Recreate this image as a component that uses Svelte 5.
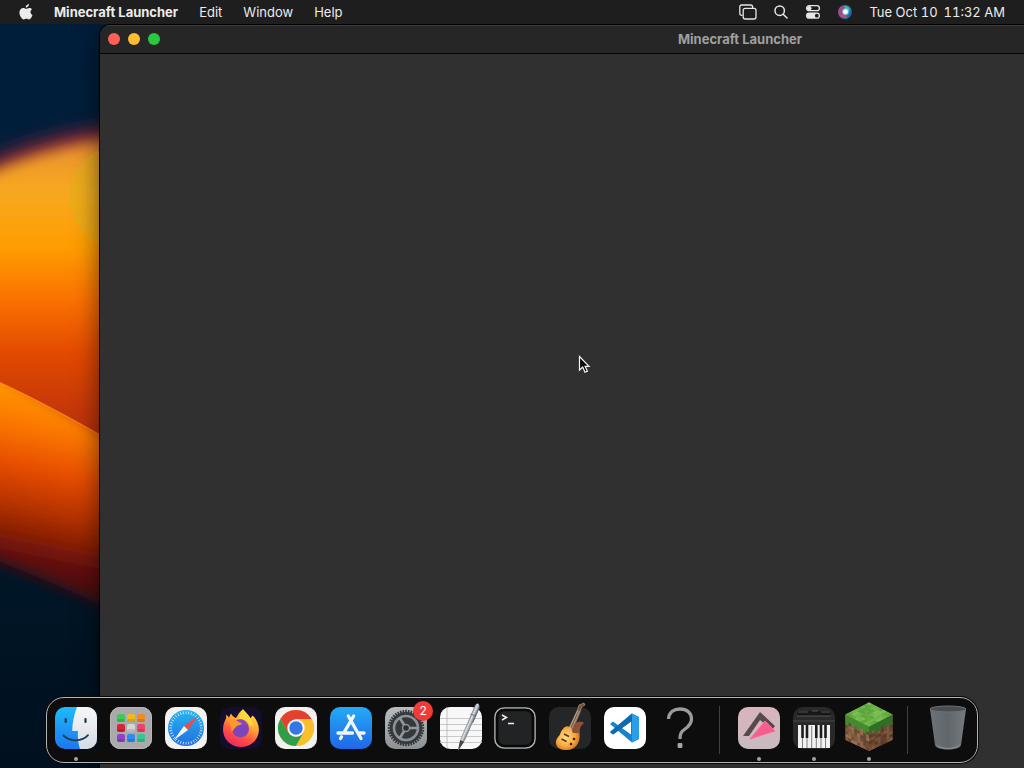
<script>
  const menus = ['Edit', 'Window', 'Help'];

  const dock = [
    { id: 'finder', label: 'Finder', running: true },
    { id: 'launchpad', label: 'Launchpad' },
    { id: 'safari', label: 'Safari' },
    { id: 'firefox', label: 'Firefox' },
    { id: 'chrome', label: 'Google Chrome' },
    { id: 'appstore', label: 'App Store' },
    { id: 'settings', label: 'System Settings', badge: 2 },
    { id: 'textedit', label: 'TextEdit' },
    { id: 'terminal', label: 'Terminal' },
    { id: 'garageband', label: 'GarageBand' },
    { id: 'vscode', label: 'Visual Studio Code' },
    { id: 'unknown', label: 'Unknown application' },
    { id: 'sep1', separator: true },
    { id: 'arrow', label: 'Arrow', running: true },
    { id: 'piano', label: 'Piano', running: true },
    { id: 'minecraft', label: 'Minecraft Launcher', running: true },
    { id: 'sep2', separator: true },
    { id: 'trash', label: 'Trash' }
  ];

  const padColors = ['#3fc95b', '#f5b91c', '#f58a1f', '#d92534', '#d5d5d8', '#f0436a', '#8f45c9', '#2c8df0', '#35c795'];
  const ticks = Array.from({ length: 36 }, (_, i) => i * 10);
  const teeth = Array.from({ length: 40 }, (_, i) => i * 9);

  // small fixed pattern of light and dark pixels for the block faces
  const dirtColors = ['#664630', '#8f6649', '#9b7052', '#6f4e37', '#805b40'];
  const grassColors = ['#72b74b', '#5fa53f', '#7cc155', '#68ad44'];
  const noise = '2704163519406273851962403175820649137502864913057284610395728140';
  const cells = [...noise].map((n, i) => ({ x: i % 8, y: Math.floor(i / 8), n: Number(n) }));
</script>

<div class="desktop">
  <svg class="wallpaper" viewBox="0 0 1024 768" preserveAspectRatio="xMinYMin slice" aria-hidden="true">
    <defs>
      <linearGradient id="sky" x1="0" y1="0" x2="0" y2="1">
        <stop offset="0" stop-color="#001d3a" />
        <stop offset=".25" stop-color="#001f3b" />
        <stop offset=".75" stop-color="#001627" />
        <stop offset="1" stop-color="#00101f" />
      </linearGradient>
      <linearGradient id="upper" gradientUnits="userSpaceOnUse" x1="0" y1="130" x2="0" y2="440">
        <stop offset="0" stop-color="#e58b33" />
        <stop offset=".2" stop-color="#f7a920" />
        <stop offset=".38" stop-color="#ff9c00" />
        <stop offset=".55" stop-color="#fa7100" />
        <stop offset=".72" stop-color="#e24a00" />
        <stop offset="1" stop-color="#b62d0e" />
      </linearGradient>
      <linearGradient id="lower" gradientUnits="userSpaceOnUse" x1="30" y1="385" x2="-10" y2="580">
        <stop offset="0" stop-color="#ff9a08" />
        <stop offset=".2" stop-color="#fc7800" />
        <stop offset=".42" stop-color="#e54b00" />
        <stop offset=".62" stop-color="#b03002" />
        <stop offset=".84" stop-color="#651009" />
        <stop offset="1" stop-color="#420a14" />
      </linearGradient>
      <filter id="soft" x="-20%" y="-20%" width="140%" height="140%"><feGaussianBlur stdDeviation="9" /></filter>
      <filter id="softer" x="-20%" y="-20%" width="140%" height="140%"><feGaussianBlur stdDeviation="7" /></filter>
    </defs>
    <rect width="1024" height="768" fill="url(#sky)" />
    <path d="M-60 188Q20 130 160 120V460H-60Z" fill="#7c2038" filter="url(#soft)" />
    <path d="M-60 202Q20 143 160 133V460H-60Z" fill="url(#upper)" filter="url(#softer)" />
    <path d="M-60 340V540Q30 570 160 632V465Z" fill="url(#lower)" filter="url(#softer)" />
    <path d="M-60 230L-60 352L0 382Q50 405 110 440L160 468V230Z" fill="url(#upper)" />
    <circle cx="120" cy="197" r="51" fill="#e6ae1a" opacity=".6" />
    <path d="M0 383Q50 406 110 441" fill="none" stroke="#ff9435" stroke-width="1" opacity=".5" />
  </svg>

  <header class="menubar">
    <nav class="menus" aria-label="Menu bar">
      <button class="apple" aria-label="Apple menu">
        <svg width="14" height="18" viewBox="0 0 14 18" fill="#ececec">
          <path d="M9.9 1c.1 1-.3 1.900-.9 2.600S7.500 4.700 6.700 4.600c-.1-.9.3-1.800.9-2.400S9.100 1.100 9.900 1z" />
          <path d="M13 6.300c-2.300 1.500-1.800 4.600.5 5.600-.6 1.700-2 4.500-3.500 4.500-1 0-1.400-.6-2.600-.6s-1.600.6-2.600.6C2.900 16.500.4 12.500.4 9.600.4 6.700 2.400 5 4.300 5c1.200 0 2.200.8 2.900.8.700 0 1.800-.9 3.300-.8 1 0 1.900.5 2.500 1.300z" />
        </svg>
      </button>
      <button class="app-name">Minecraft Launcher</button>
      {#each menus as menu}
        <button>{menu}</button>
      {/each}
    </nav>
    <div class="status">
      <button aria-label="Stage Manager">
        <svg width="18" height="16" viewBox="0 0 18 16" fill="none" stroke="#e6e6e6" stroke-width="1.300">
          <path d="M3.500 11.300H2.800C1.500 11.300.8 10.600.8 9.300V3C.8 1.700 1.500 1 2.800 1h8.800c1.300 0 2 .7 2 2v1" />
          <rect x="4.200" y="4.400" width="12.800" height="10.600" rx="2" />
        </svg>
      </button>
      <button aria-label="Spotlight">
        <svg width="14" height="16" viewBox="0 0 14 16" fill="none" stroke="#e6e6e6" stroke-width="1.500" stroke-linecap="round">
          <circle cx="5.700" cy="6.700" r="4.700" /><path d="M9.200 10.200L13 14" />
        </svg>
      </button>
      <button aria-label="Control Center">
        <svg width="16" height="16" viewBox="0 0 16 16">
          <rect x="1.600" y="1.700" width="12.800" height="5" rx="2.500" fill="none" stroke="#e6e6e6" stroke-width="1.300" />
          <circle cx="4.200" cy="4.200" r="2.300" fill="#e6e6e6" />
          <rect x="1" y="8.600" width="14" height="6.200" rx="3.100" fill="#e6e6e6" />
          <circle cx="11.800" cy="11.700" r="1.900" fill="#1e1e1e" />
        </svg>
      </button>
      <button aria-label="Siri">
        <svg width="14" height="14" viewBox="1 1 14 14">
          <defs>
            <linearGradient id="siri" x1="0" y1=".3" x2="1" y2=".7">
              <stop offset="0" stop-color="#b94383" /><stop offset=".4" stop-color="#75569f" /><stop offset=".7" stop-color="#247fae" /><stop offset="1" stop-color="#1e4d9c" />
            </linearGradient>
            <radialGradient id="glow"><stop offset="0" stop-color="#fff" /><stop offset=".5" stop-color="#dffafa" /><stop offset="1" stop-color="#7ce0dc" stop-opacity="0" /></radialGradient>
          </defs>
          <circle cx="8" cy="8" r="7" fill="url(#siri)" />
          <path d="M7 2c4-.5 6 2 5.500 5C10 5 8 6 7 2z" fill="#40b6a1" />
          <path d="M3 11c3-2 5-1 7 2-3 2-6 .5-7-2z" fill="#d34a66" opacity=".8" />
          <circle cx="8.500" cy="7.700" r="4" fill="url(#glow)" />
        </svg>
      </button>
      <button class="clock"><span>Tue Oct 10</span><span>11:32 AM</span></button>
    </div>
  </header>

  <main class="window">
    <div class="titlebar">
      <div class="lights">
        <button class="close" aria-label="Close"></button>
        <button class="minimize" aria-label="Minimize"></button>
        <button class="zoom" aria-label="Zoom"></button>
      </div>
      <h1>Minecraft Launcher</h1>
    </div>
    <div class="content"></div>
  </main>

  <svg class="pointer" width="14" height="20" viewBox="0 0 14 20" aria-hidden="true">
    <path d="M1.500 1.500V15L4.700 12L7 17.300L9.400 16.200L7.100 11.300H11Z" fill="#050505" stroke="#f5f5f5" stroke-width="1.200" />
  </svg>

  <nav class="dock" aria-label="Dock">
    {#each dock as item (item.id)}
      {#if item.separator}
        <span class="separator"></span>
      {:else}
        <button class="dock-item" aria-label={item.label}>
          <svg width="54" height="54" viewBox="0 0 54 54">
            {#if item.id === 'finder'}
              <defs>
                <linearGradient id="fblue" x1="0" y1="0" x2="0" y2="1"><stop offset="0" stop-color="#20b9fa" /><stop offset="1" stop-color="#1c78ee" /></linearGradient>
                <linearGradient id="fwhite" x1="0" y1="0" x2="0" y2="1"><stop offset="0" stop-color="#f7f7f8" /><stop offset="1" stop-color="#d5dce6" /></linearGradient>
                <clipPath id="fclip"><rect x="6" y="6" width="42" height="42" rx="10" /></clipPath>
              </defs>
              <g clip-path="url(#fclip)">
                <path d="M6 6H48V48H6Z" fill="url(#fblue)" />
                <path d="M28 6C25 14 23.500 21 23.200 30H29C28.500 36 29 42 31 48H49V6Z" fill="url(#fwhite)" />
              </g>
              <path d="M16.700 18v3M36.500 18v3" stroke="#17394f" stroke-width="2.200" stroke-linecap="round" />
              <path d="M14.500 34.500C21 41 33 41 39 34.200" fill="none" stroke="#183f57" stroke-width="1.800" stroke-linecap="round" />
            {:else if item.id === 'launchpad'}
              <rect x="6" y="6" width="42" height="42" rx="10" fill="#aaa9ab" />
              <rect x="6.500" y="6.500" width="41" height="41" rx="9.500" fill="none" stroke="#b8b7b8" />
              {#each padColors as color, i}
                <rect x={13 + (i % 3) * 10} y={13 + Math.floor(i / 3) * 10} width="8" height="8" rx="2" fill={color} />
                <rect x={13 + (i % 3) * 10} y={18 + Math.floor(i / 3) * 10} width="8" height="3" rx="1.500" fill="#000" opacity=".13" />
              {/each}
            {:else if item.id === 'safari'}
              <defs><linearGradient id="saf" x1="0" y1="0" x2="0" y2="1"><stop offset="0" stop-color="#25b5f1" /><stop offset="1" stop-color="#246ee0" /></linearGradient></defs>
              <rect x="6" y="6" width="42" height="42" rx="10" fill="#f2f2f3" />
              <circle cx="27" cy="27" r="18" fill="url(#saf)" />
              {#each ticks as angle}
                <path d="M27 10.300V13" stroke="#d9f1ff" stroke-width=".8" transform="rotate({angle} 27 27)" />
              {/each}
              <path d="M39.500 14.500L25 25L29 29Z" fill="#f04b46" />
              <path d="M14.500 39.500L25 25L29 29Z" fill="#f4f4f4" />
            {:else if item.id === 'firefox'}
              <defs>
                <linearGradient id="ff" x1=".8" y1="0" x2=".3" y2="1"><stop offset="0" stop-color="#ffe44b" /><stop offset=".4" stop-color="#ffa632" /><stop offset=".7" stop-color="#ff5044" /><stop offset="1" stop-color="#e92963" /></linearGradient>
                <radialGradient id="ffp"><stop offset="0" stop-color="#7148c9" /><stop offset="1" stop-color="#8740b4" /></radialGradient>
              </defs>
              <rect x="6" y="6" width="42" height="42" rx="10" fill="#150d2b" />
              <path d="M29 8.200C30 11 34 13.200 36.500 17.200L38.500 14.500C42 17.500 45 23 44.900 29C44.700 38.500 37 46 27 46C17 46 9 38.500 9 28.500C9 24 10.500 20 12 17.500L12.300 13.500L15 16.500L17 12.500C18 15 20 16 22 17C24 14 25 11 29 8.200Z" fill="url(#ff)" />
              <path d="M24 18C31 16.500 36 21 36 27C36 21 42 25 38 33C42 25 38 17 29 8.200C26 11 27 15 24 18Z" fill="#ffd83c" />
              <circle cx="26.500" cy="28" r="8.500" fill="url(#ffp)" />
              <path d="M20 21C23 17 31 17 34 24L28 24Z" fill="#8a45c4" />
              <path d="M12 18C17 16 21 18 24 20.500L28 22.500C27 24.500 23 24 22 26C20 28 19 29 18 31C16 27 18 23 12 18Z" fill="#ff972b" />
            {:else if item.id === 'chrome'}
              <rect x="6" y="6" width="42" height="42" rx="10" fill="#f1f1f1" />
              <circle cx="27" cy="27" r="18" fill="#f9bf2d" />
              <path d="M11.400 18A18 18 0 0 1 42.600 18H27V27L19.200 31.500Z" fill="#e4402f" />
              <path d="M11.400 18L19.200 31.500L27 36L34.800 31.500L27 45A18 18 0 0 1 11.400 18Z" fill="#329d49" />
              <path d="M42.600 18A18 18 0 0 1 27 45L34.800 31.500V18Z" fill="#f9bf2d" />
              <circle cx="27" cy="27" r="8.700" fill="#f7f7f7" />
              <circle cx="27" cy="27" r="6.700" fill="#3676e5" />
            {:else if item.id === 'appstore'}
              <defs><linearGradient id="store" x1="0" y1="0" x2="0" y2="1"><stop offset="0" stop-color="#24aaf6" /><stop offset="1" stop-color="#2067e7" /></linearGradient></defs>
              <rect x="6" y="6" width="42" height="42" rx="10" fill="url(#store)" />
              <g fill="none" stroke="#f1f6fc" stroke-width="3.300" stroke-linecap="round">
                <path d="M29.700 15L19.800 31.800M24.300 15L37 37.500M14 32H28.500M34 32H40M17.500 35.800L16.500 37.500" />
              </g>
            {:else if item.id === 'settings'}
              <defs><linearGradient id="set" x1="0" y1="0" x2="0" y2="1"><stop offset="0" stop-color="#b9bdc0" /><stop offset="1" stop-color="#8d9194" /></linearGradient></defs>
              <rect x="6" y="6" width="42" height="42" rx="10" fill="url(#set)" />
              {#each teeth as angle}
                <path d="M27 8.800V12" stroke="#303437" stroke-width="1.600" transform="rotate({angle} 27 27)" />
              {/each}
              <circle cx="27" cy="27" r="16" fill="#34383b" />
              <circle cx="27" cy="27" r="12" fill="none" stroke="#8b9195" stroke-width="2.600" />
              <circle cx="27" cy="27" r="3.500" fill="#2c3033" stroke="#8b9093" stroke-width="1.500" />
              <path d="M30.500 27H39M25.200 24L20.500 16.500M25.200 30L20.500 37.500" stroke="#92979a" stroke-width="2.600" />
            {:else if item.id === 'textedit'}
              <defs><linearGradient id="pen" x1="0" y1="0" x2="1" y2="0"><stop offset="0" stop-color="#65717c" /><stop offset=".4" stop-color="#e1e4e6" /><stop offset="1" stop-color="#6b7279" /></linearGradient></defs>
              <rect x="6" y="6" width="42" height="42" rx="10" fill="#f8f8f8" />
              <path d="M6 17.500H48M6 23.500H48M6 29.500H48M6 35.500H48M6 41.500H48" stroke="#c4c4c4" stroke-width=".9" />
              <path d="M13 6V48" stroke="#b9a8a8" stroke-width=".7" />
              <g transform="rotate(24 34 26)">
                <path d="M31.500 3Q33.500 -2 36.500 3V39L34.500 52L32 39Z" fill="url(#pen)" />
                <path d="M32 41H36.500L34.500 52Z" fill="#464646" />
                <path d="M36.500 4V20M31 13H37" stroke="#576775" stroke-width="1" />
              </g>
            {:else if item.id === 'terminal'}
              <rect x="7" y="7" width="40" height="40" rx="9" fill="#222324" stroke="#aeb0b0" stroke-width="1.600" />
              <rect x="9" y="9" width="36" height="36" rx="7" fill="none" stroke="#080808" stroke-width="2.600" />
              <path d="M14 14L18.500 16.500L14 19M20 22.500H26" fill="none" stroke="#f0f0f0" stroke-width="1.500" />
            {:else if item.id === 'garageband'}
              <defs><radialGradient id="gb" cx=".35" cy=".55" r=".65"><stop offset="0" stop-color="#ffe07a" /><stop offset=".5" stop-color="#f9a63a" /><stop offset="1" stop-color="#a8481c" /></radialGradient></defs>
              <rect x="6" y="6" width="42" height="42" rx="10" fill="#242627" />
              <path d="M25 29L34.500 9L36 4L41 2L42 4L38.500 6L37 11L29 30Z" fill="#76513a" stroke="#b7aaa0" stroke-width=".6" />
              <path d="M20 28C22 24 27 25 28 27C31 22 37 19 41 22C38 24 36 27 36.500 32C38 42 32 49 24 49C14 50 10 42 15 36C18 33 17 31 20 28Z" fill="url(#gb)" />
              <path d="M28 27C31 22 37 19 41 22C38 24 36 27 36.500 32L30 32Z" fill="#8a523a" />
              <path d="M20 42L35 9M22 43L36.500 10" stroke="#d8ccb8" stroke-width=".6" />
              <path d="M21 33L26 35.500M18.500 38L23.500 40.500" stroke="#5e2c18" stroke-width="1.500" />
              <circle cx="31" cy="38" r="1.300" fill="#3f1d11" /><circle cx="28" cy="43" r="1.300" fill="#3f1d11" />
            {:else if item.id === 'vscode'}
              <rect x="6" y="6" width="42" height="42" rx="10" fill="#fff" />
              <path d="M34 12.500L41 16V38L34 41.500L12 23L15 20.500L33 33.500V20.500L15 33.500L12 31Z" fill="#1683cf" />
              <path d="M34 12.500L41 16V38L34 41.500V12.500Z" fill="#2b9ee9" />
              <path d="M34 12.500L12 31L15 33.500L34 20Z" fill="#1269ad" />
            {:else if item.id === 'unknown'}
              <path d="M15.500 18C16 11 21 8 27 8C34 8 38.500 12 38.500 18C38.500 23 35.500 25.500 32 28C28.500 30.500 27 32 27 38" fill="none" stroke="#9b9b9b" stroke-width="3.300" />
              <rect x="24.600" y="42" width="4.800" height="5" rx="1" fill="#a5a5a5" />
            {:else if item.id === 'arrow'}
              <defs>
                <linearGradient id="arr" x1="0" y1="0" x2="0" y2="1"><stop offset="0" stop-color="#d9b4bd" /><stop offset="1" stop-color="#c7bbc0" /></linearGradient>
                <linearGradient id="pink" x1="0" y1="0" x2="1" y2="1"><stop offset="0" stop-color="#ff5c90" /><stop offset="1" stop-color="#ed5f8b" /></linearGradient>
              </defs>
              <rect x="6" y="6" width="42" height="42" rx="10" fill="url(#arr)" />
              <path d="M28 11L43 25L40 29L28 19L17 35L11 35Z" fill="#58494d" />
              <path d="M33 20L43 30L18 38Z" fill="url(#pink)" stroke="#f9709a" stroke-linejoin="round" />
            {:else if item.id === 'piano'}
              <rect x="6" y="6" width="42" height="42" rx="10" fill="#29292a" />
              <path d="M10 10H44V15H10Z" fill="#171718" />
              <path d="M11 11H21M25 10H31M34 11H43M10 15H44" stroke="#656566" stroke-width=".8" />
              <path d="M6 20H48" stroke="#48484a" />
              <rect x="11" y="24" width="32" height="23" fill="#f1f1f1" />
              <path d="M15.500 25V47M20 25V47M24.700 25V47M29.300 25V47M34 25V47M38.500 25V47" stroke="#626264" stroke-width=".8" />
              <path d="M15.500 24V37M20 24V37M29.300 24V37M34 24V37M38.500 24V37" stroke="#1c1c1d" stroke-width="2.600" />
            {:else if item.id === 'minecraft'}
              <path d="M3.500 13L27 26V50L3.500 39Z" fill="#805a40" />
              <path d="M27 26L50.500 13V39L27 50Z" fill="#68462f" />
              <g transform="matrix(2.940 1.400 0 3.100 3.500 14)">
                {#each cells as c}<rect x={c.x} y={c.y} width="1" height="1" fill={dirtColors[c.n % 5]} />{/each}
                <path d="M0 0H8V2H7V3H6V2H5V3H4V2H3V3H2V2H1V3H0Z" fill="#438a30" />
              </g>
              <g transform="matrix(2.940 -1.400 0 3.100 27 25.200)">
                {#each cells as c}<rect x={c.x} y={c.y} width="1" height="1" fill={dirtColors[(c.n + 2) % 5]} />{/each}
                <path d="M0 0H8V8H0Z" fill="#351d10" opacity=".25" />
                <path d="M0 0H8V3H7V2H6V3H5V2H4V3H2V2H1V3H0Z" fill="#2f6f26" />
              </g>
              <g transform="matrix(2.940 1.500 -2.940 1.500 27 1.500)">
                <rect width="8" height="8" fill="#6bb047" />
                {#each cells as c}<rect x={c.x} y={c.y} width="1" height="1" fill={grassColors[c.n % 4]} />{/each}
              </g>
            {:else if item.id === 'trash'}
              <defs><linearGradient id="bin" x1="0" y1="0" x2="1" y2="0"><stop offset="0" stop-color="#6d7276" /><stop offset=".5" stop-color="#60666a" /><stop offset="1" stop-color="#777b7e" /></linearGradient></defs>
              <path d="M9 8L14 44C15 50 39 50 40 44L45 8Z" fill="url(#bin)" />
              <ellipse cx="27" cy="8" rx="18" ry="3" fill="#4a4e51" stroke="#6f7376" stroke-width="1" />
              <path d="M15 43C19 48 35 48 39 43C38 50 16 50 15 43Z" fill="#9da1a3" opacity=".6" />
            {/if}
          </svg>
          <span class="dot" class:running={item.running}></span>
          {#if item.badge}<span class="badge">{item.badge}</span>{/if}
        </button>
      {/if}
    {/each}
  </nav>
</div>

<style>
  :global(body) {
    margin: 0;
    background: #001627;
  }

  .desktop {
    position: relative;
    min-height: 100vh;
    overflow: hidden;
    font-family: Inter, "Liberation Sans", sans-serif;
    font-size: 13px;
    line-height: 16px;
    color: #ececec;
  }

  button {
    display: flex;
    align-items: center;
    margin: 0;
    padding: 0;
    border: 0;
    background: none;
    color: inherit;
    font: inherit;
    white-space: nowrap;
  }

  .wallpaper {
    position: absolute;
    inset: 0;
    width: 100%;
    height: 100%;
  }

  .menubar {
    position: relative;
    z-index: 2;
    display: flex;
    justify-content: space-between;
    box-sizing: border-box;
    height: 24px;
    padding: 0 19px 1px;
    background: #1e1e1e;
  }

  .menus,
  .status {
    display: flex;
    align-items: center;
    gap: 21px;
  }

  .status {
    gap: 17px;
  }

  .app-name {
    font-weight: 700;
  }

  .clock {
    gap: 6px;
    font-variant-numeric: tabular-nums;
  }

  .window {
    position: absolute;
    top: 25px;
    bottom: 0;
    left: 100px;
    display: flex;
    flex-direction: column;
    width: 1280px;
    border-radius: 10px 10px 0 0;
    background: #303030;
    box-shadow: 0 0 0 1px #000, 0 8px 26px rgba(0, 0, 0, 0.6);
    overflow: hidden;
  }

  .titlebar {
    display: grid;
    grid-template-columns: 1fr auto 1fr;
    align-items: center;
    height: 28px;
    padding: 0 8px;
    border-bottom: 1px solid #050505;
    background: #262626;
    box-shadow: inset 0 1px #3d3d3d;
  }

  .lights {
    display: flex;
    gap: 8px;
  }

  .lights button {
    width: 12px;
    height: 12px;
    border-radius: 50%;
  }

  .close {
    background: #ff5f57;
  }

  .minimize {
    background: #febc2e;
  }

  .zoom {
    background: #28c840;
  }

  h1 {
    margin: 0;
    color: #a0a0a0;
    font-size: 13px;
    font-weight: 700;
  }

  .content {
    flex: 1;
  }

  .pointer {
    position: absolute;
    top: 355px;
    left: 578px;
  }

  .dock {
    position: absolute;
    right: 46px;
    bottom: 5px;
    left: 46px;
    display: flex;
    box-sizing: border-box;
    height: 66px;
    padding: 3px 2px 1px;
    border: 1px solid #b4b4b4;
    border-radius: 18px;
    background: #0d0d0d;
    box-shadow: 0 0 0 1px #080808;
  }

  .dock-item {
    position: relative;
    flex: 1;
    min-width: 0;
    flex-direction: column;
    gap: 2px;
  }

  .dock-item svg {
    flex-shrink: 0;
    overflow: visible;
  }

  .dot {
    width: 4px;
    height: 4px;
    border-radius: 50%;
  }

  .dot.running {
    background: #a3a3a3;
  }

  .badge {
    position: absolute;
    top: 0;
    right: 0;
    width: 20px;
    border-radius: 10px;
    background: #f13b35;
    color: #fff;
    font-size: 12px;
    line-height: 20px;
    text-align: center;
  }

  .separator {
    flex: 0 0 1px;
    height: 48px;
    margin: 5px 12px 0 11px;
    background: #414141;
  }
</style>
